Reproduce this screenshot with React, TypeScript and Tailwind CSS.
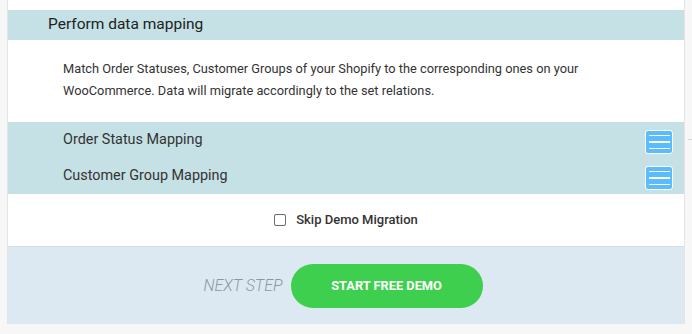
export default function App() {
  const rows = ['Order Status Mapping', 'Customer Group Mapping'];

  return (
    <div className="relative w-[692px] h-[334px] bg-[#f7f7f7] font-['Roboto',sans-serif] text-[#333]">
      <div className="ml-[7px] w-[678px] h-[324px] flex flex-col bg-white border-x border-[#e4e4e4]">
        <div className="h-[10px]" />

        {/* Header */}
        <div className="h-[30px] bg-[#c5e1e5] pl-[40px] flex items-center">
          <h2 className="text-[15.5px] text-[#222]">Perform data mapping</h2>
        </div>

        {/* Description */}
        <div className="pl-[55px] pr-4 pt-[18px] pb-[20px] text-[12.8px] leading-[22px] text-[#333]">
          Match Order Statuses, Customer Groups of your Shopify to the corresponding ones on your
          <br />
          WooCommerce. Data will migrate accordingly to the set relations.
        </div>

        {/* Mapping rows */}
        <div className="bg-[#c5e1e5]">
          {rows.map(row => (
            <div key={row} className="h-[36px] pl-[55px] pr-[11px] flex items-center justify-between">
              <span className="text-[14.4px] text-[#333]">{row}</span>
              <div className="mt-[3px] w-[28px] h-[24px] rounded-[3px] border border-white bg-[#5bbcfd] flex flex-col items-center justify-center gap-[5px]">
                <div className="w-[21px] h-px bg-white" />
                <div className="w-[21px] h-[2px] bg-white" />
                <div className="w-[21px] h-px bg-white" />
              </div>
            </div>
          ))}
        </div>

        {/* Skip demo */}
        <div className="h-[53px] flex items-center justify-center gap-[10px] border-b border-[#d3dee8]">
          <span className="w-[12px] h-[12px] rounded-[2px] border border-[#6b6b6b] bg-white" />
          <span className="text-[13px] font-medium text-[#333]">Skip Demo Migration</span>
        </div>

        {/* Footer */}
        <div className="flex-1 bg-[#dce8f2] flex items-center justify-center gap-[8px] pr-[6px]">
          <span className="text-[16px] italic font-light text-[#8e979f]">NEXT STEP</span>
          <button className="w-[192px] h-[44px] rounded-full bg-[#3ecf4e] text-white text-[12.8px] font-bold">
            START FREE DEMO
          </button>
        </div>
      </div>

      <div className="absolute left-[688px] top-[139px] w-[4px] h-px bg-[#d6d6d6]" />
    </div>
  );
}
